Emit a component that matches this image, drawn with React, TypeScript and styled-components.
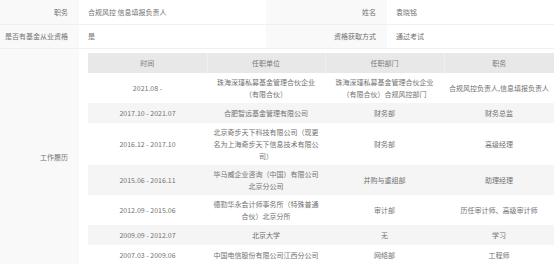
import React from "react";
import styled, { createGlobalStyle } from "styled-components";

const GlobalStyle = createGlobalStyle`
  html, body {
    margin: 0;
    padding: 0;
    background: #ffffff;
    overflow: hidden;
  }
  body {
    font-family: "Noto Sans CJK SC", "Noto Sans", sans-serif;
    color: #727272;
  }
`;

const InfoTable = styled.table`
  width: 554px;
  table-layout: fixed;
  border-collapse: collapse;
  font-size: 7px;
  line-height: 12px;
`;

const InfoRow = styled.tr<{ $h?: number }>`
  height: ${(p) => (p.$h ? `${p.$h}px` : "auto")};
  border-bottom: 1px solid #f0f0f0;
`;

const Label = styled.td`
  background: #f9f9f9;
  text-align: right;
  padding: 0 11px 0 0;
  color: #727272;
  white-space: nowrap;
  vertical-align: middle;
`;

const Value = styled.td`
  background: #ffffff;
  text-align: left;
  padding: 0 9px;
  color: #727272;
  vertical-align: middle;
`;

const NestedCell = styled.td`
  background: #ffffff;
  padding: 4px 0 0 9px;
  vertical-align: top;
`;

const HistoryTable = styled.table`
  width: 466px;
  table-layout: fixed;
  border-collapse: collapse;
  font-size: 7px;
  line-height: 12px;
`;

const HeadCell = styled.th`
  background: #e8e8e8;
  font-weight: normal;
  color: #7a7a7a;
  height: 20px;
  padding: 0 5px;
  text-align: center;
  & + & {
    border-left: 1px solid #f0f0f0;
  }
`;

const BodyRow = styled.tr`
  height: 20px;
  &:nth-child(even) {
    background: #f5f5f5;
  }
`;

const Cell = styled.td`
  padding: 3px 5px;
  text-align: center;
  vertical-align: middle;
  color: #727272;
`;

type Job = {
  time: string;
  company: string;
  dept: string;
  title: string;
};

const jobs: Job[] = [
  {
    time: "2021.08 -",
    company: "珠海深瑾私募基金管理合伙企业（有限合伙）",
    dept: "珠海深瑾私募基金管理合伙企业（有限合伙）合规风控部门",
    title: "合规风控负责人,信息填报负责人",
  },
  {
    time: "2017.10 - 2021.07",
    company: "合肥智远基金管理有限公司",
    dept: "财务部",
    title: "财务总监",
  },
  {
    time: "2016.12 - 2017.10",
    company: "北京奇步天下科技有限公司（现更名为上海奇步天下信息技术有限公司）",
    dept: "财务部",
    title: "高级经理",
  },
  {
    time: "2015.06 - 2016.11",
    company: "毕马威企业咨询（中国）有限公司北京分公司",
    dept: "并购与重组部",
    title: "助理经理",
  },
  {
    time: "2012.09 - 2015.06",
    company: "德勤华永会计师事务所（特殊普通合伙）北京分所",
    dept: "审计部",
    title: "历任审计师、高级审计师",
  },
  {
    time: "2009.09 - 2012.07",
    company: "北京大学",
    dept: "无",
    title: "学习",
  },
  {
    time: "2007.03 - 2009.06",
    company: "中国电信股份有限公司江西分公司",
    dept: "网络部",
    title: "工程师",
  },
];

const App = () => {
  return (
    <>
      <GlobalStyle />
      <InfoTable>
        <colgroup>
          <col style={{ width: 79 }} />
          <col style={{ width: 187 }} />
          <col style={{ width: 121 }} />
          <col style={{ width: 167 }} />
        </colgroup>
        <tbody>
          <InfoRow $h={24}>
            <Label>职务</Label>
            <Value>合规风控 信息填报负责人</Value>
            <Label>姓名</Label>
            <Value>袁晓铭</Value>
          </InfoRow>
          <InfoRow $h={24}>
            <Label>是否有基金从业资格</Label>
            <Value>是</Value>
            <Label>资格获取方式</Label>
            <Value>通过考试</Value>
          </InfoRow>
          <InfoRow>
            <Label>工作履历</Label>
            <NestedCell colSpan={3}>
              <HistoryTable>
                <colgroup>
                  <col style={{ width: 119 }} />
                  <col style={{ width: 118 }} />
                  <col style={{ width: 119 }} />
                  <col style={{ width: 110 }} />
                </colgroup>
                <thead>
                  <tr>
                    <HeadCell>时间</HeadCell>
                    <HeadCell>任职单位</HeadCell>
                    <HeadCell>任职部门</HeadCell>
                    <HeadCell>职务</HeadCell>
                  </tr>
                </thead>
                <tbody>
                  {jobs.map((job) => (
                    <BodyRow key={job.time}>
                      <Cell>{job.time}</Cell>
                      <Cell>{job.company}</Cell>
                      <Cell>{job.dept}</Cell>
                      <Cell>{job.title}</Cell>
                    </BodyRow>
                  ))}
                </tbody>
              </HistoryTable>
            </NestedCell>
          </InfoRow>
        </tbody>
      </InfoTable>
    </>
  );
};

export default App;
